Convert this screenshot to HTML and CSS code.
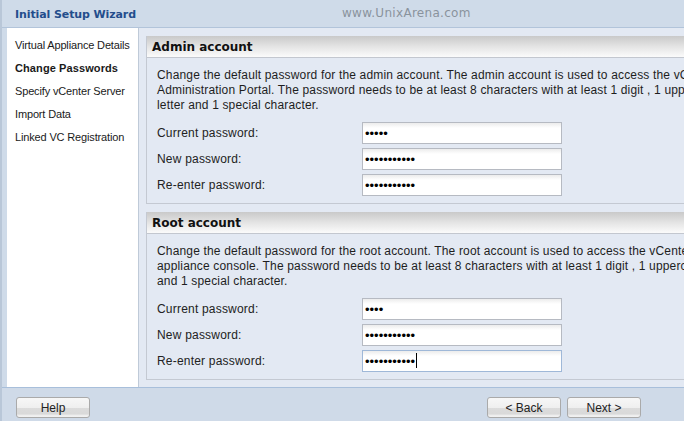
FILE: index.html
```html
<!DOCTYPE html>
<html>
<head>
<meta charset="utf-8">
<link rel="stylesheet" href="styles.css">
</head>
<body>
<div class="app">
  <header class="titlebar">
    <span class="title">Initial Setup Wizard</span>
    <span class="watermark">www.UnixArena.com</span>
  </header>
  <div class="content">
    <nav class="sidebar">
      <div class="nav-item">Virtual Appliance Details</div>
      <div class="nav-item active">Change Passwords</div>
      <div class="nav-item">Specify vCenter Server</div>
      <div class="nav-item">Import Data</div>
      <div class="nav-item">Linked VC Registration</div>
    </nav>
    <main class="main">
      <section class="panel">
        <div class="panel-head">Admin account</div>
        <div class="panel-body">
          <p class="desc">Change the default password for the admin account. The admin account is used to access the vCenter Server<br>Administration Portal. The password needs to be at least 8 characters with at least 1 digit , 1 uppercase<br>letter and 1 special character.</p>
          <div class="form">
            <span class="label">Current password:</span>
            <input class="field" type="password" value="abcde" readonly>
            <span class="label">New password:</span>
            <input class="field" type="password" value="abcdefghijk" readonly>
            <span class="label">Re-enter password:</span>
            <input class="field" type="password" value="abcdefghijk" readonly>
          </div>
        </div>
      </section>
      <section class="panel">
        <div class="panel-head">Root account</div>
        <div class="panel-body">
          <p class="desc">Change the default password for the root account. The root account is used to access the vCenter Server<br>appliance console. The password needs to be at least 8 characters with at least 1 digit , 1 uppercase letter<br>and 1 special character.</p>
          <div class="form">
            <span class="label">Current password:</span>
            <input class="field" type="password" value="abcd" readonly>
            <span class="label">New password:</span>
            <input class="field" type="password" value="abcdefghijk" readonly>
            <span class="label">Re-enter password:</span>
            <span class="field-wrap">
              <input class="field focused" type="password" value="abcdefghijk" readonly>
              <span class="caret"></span>
            </span>
          </div>
        </div>
      </section>
    </main>
  </div>
  <footer class="footer">
    <button class="btn">Help</button>
    <span class="spacer"></span>
    <button class="btn">&lt; Back</button>
    <button class="btn">Next &gt;</button>
  </footer>
</div>
</body>
</html>
```

FILE: styles.css
```css
html, body {
  margin: 0;
  padding: 0;
}
body {
  width: 684px;
  height: 421px;
  overflow: hidden;
  font-family: "Liberation Sans", Arial, sans-serif;
  font-size: 12px;
  color: #1e1e1e;
  background: #cfdae8;
}
.app {
  width: 684px;
  height: 421px;
  display: flex;
  flex-direction: column;
  box-sizing: border-box;
  border-left: 2px solid #b9c7d8;
  overflow: hidden;
}
.titlebar {
  position: relative;
  height: 27px;
  flex-shrink: 0;
  border-bottom: 1px solid #b2c4da;
  background: #cfdbe9;
  display: flex;
  align-items: center;
  padding-left: 13px;
}
.title {
  font-family: "DejaVu Sans", Verdana, sans-serif;
  font-weight: bold;
  font-size: 11px;
  letter-spacing: -0.1px;
  color: #234d8c;
  margin-top: 1px;
}
.watermark {
  position: absolute;
  left: 340px;
  top: 6px;
  font-family: "DejaVu Sans", Verdana, sans-serif;
  font-size: 12px;
  letter-spacing: 0.3px;
  color: #8a939d;
}
.content {
  height: 359px;
  flex-shrink: 0;
  display: flex;
  padding-left: 5px;
  border-bottom: 1px solid #a8bfdb;
  background: #cfdbe9;
}
.sidebar {
  width: 132px;
  flex-shrink: 0;
  background: #ffffff;
  border-right: 1px solid #bfcad8;
  padding-top: 6px;
  padding-left: 8px;
  box-sizing: border-box;
}
.nav-item {
  height: 23px;
  line-height: 23px;
  font-size: 11px;
  color: #1a1a1a;
  white-space: nowrap;
  letter-spacing: -0.15px;
}
.nav-item.active {
  font-weight: bold;
  letter-spacing: 0.1px;
}
.main {
  flex: 1;
  min-width: 0;
  background: #e3e9f3;
  padding: 8px 0 0 7px;
  overflow: hidden;
  display: flex;
  flex-direction: column;
  gap: 8px;
}
.panel {
  width: 640px;
  flex-shrink: 0;
  border-left: 1px solid #c4c9d2;
  border-bottom: 1px solid #c4c9d2;
}
.panel-head {
  height: 21px;
  line-height: 22px;
  border-bottom: 1px solid #c3c7cf;
  background: linear-gradient(#c9c9c9, #e4e4e4 50%, #fbfbfb);
  padding-left: 5px;
  font-family: "DejaVu Sans", Verdana, sans-serif;
  font-weight: bold;
  font-size: 12px;
  color: #111;
}
.panel-body {
  padding: 10px 0 7px 10px;
}
.desc {
  margin: 0 0 9px 0;
  line-height: 15px;
  white-space: nowrap;
  letter-spacing: 0.16px;
  color: #1e1e1e;
}
.form {
  display: grid;
  grid-template-columns: 205px 200px;
  row-gap: 4px;
  align-items: center;
}
.label {
  color: #222;
  line-height: 22px;
  letter-spacing: 0.2px;
}
.field {
  box-sizing: border-box;
  width: 200px;
  height: 22px;
  margin: 0;
  padding: 0 2px;
  border: 1px solid #b6bac2;
  border-radius: 0;
  outline: none;
  background: linear-gradient(#ececec, #ffffff 5px);
  font-family: "Liberation Sans", Arial, sans-serif;
  font-size: 13px;
  color: #000;
}
.field.focused {
  border-color: #9fb8d8;
}
.field-wrap {
  position: relative;
  display: block;
  width: 200px;
  height: 22px;
}
.caret {
  position: absolute;
  left: 54px;
  top: 3px;
  width: 1px;
  height: 15px;
  background: #000;
}
.footer {
  flex: 1;
  display: flex;
  align-items: flex-start;
  padding: 9px 43px 0 14px;
  gap: 6px;
  background: #cfdae8;
}
.spacer {
  flex: 1;
}
.btn {
  width: 74px;
  height: 21px;
  padding: 0;
  margin: 0;
  border: 1px solid #aaaaaa;
  border-radius: 3px;
  background: linear-gradient(#f7f7f7, #efefef 50%, #dcdcdc 52%, #d9d9d9 86%, #ececec 88%, #f2f2f2);
  font-family: "Liberation Sans", Arial, sans-serif;
  font-size: 12px;
  color: #222;
}
```
